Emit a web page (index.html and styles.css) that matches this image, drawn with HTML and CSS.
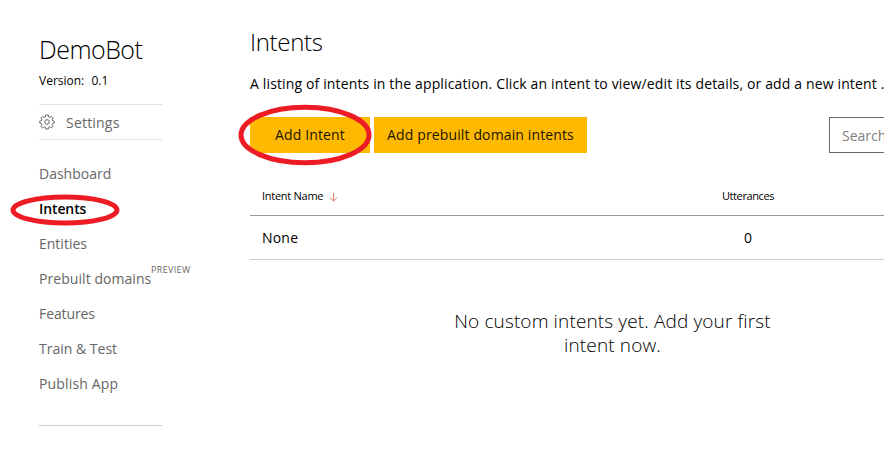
FILE: index.html
```html
<!DOCTYPE html>
<html lang="en">
<head>
<meta charset="utf-8">
<title>DemoBot - Intents</title>
<link rel="stylesheet" href="styles.css">
</head>
<body>
<div class="app">
  <aside class="sidebar">
    <h1 class="app-name">DemoBot</h1>
    <p class="version">Version: <span class="version-number">0.1</span></p>
    <a class="settings">
      <svg class="gear" viewBox="0 0 16 16" width="16" height="16">
        <path d="M6.7 1h2.6l.4 2 1.1.45 1.7-1.1 1.65 1.65-1.1 1.7.45 1.1 1.8.35v1.9l-1.8.4-.45 1.1 1.1 1.7-1.65 1.65-1.7-1.1-1.1.45-.4 1.75H6.7l-.4-1.75-1.1-.45-1.7 1.1-1.65-1.65 1.1-1.7-.45-1.1-1.75-.4v-1.9l1.75-.35.45-1.1-1.1-1.7L3.5 2.35l1.7 1.1L6.3 3z"/>
        <circle cx="8" cy="8" r="2.3"/>
      </svg>
      <span class="settings-label">Settings</span>
    </a>
    <nav class="menu">
      <a class="item">Dashboard</a>
      <a class="item active">Intents<svg class="mark mark-nav" viewBox="0 0 110 32" width="110" height="32"><ellipse cx="55" cy="16" rx="52" ry="13"/></svg></a>
      <a class="item">Entities</a>
      <a class="item prebuilt">Prebuilt domains<span class="preview">PREVIEW</span></a>
      <a class="item features">Features</a>
      <a class="item">Train &amp; Test</a>
      <a class="item publish">Publish App</a>
    </nav>
  </aside>
  <main class="content">
    <h2 class="title">Intents</h2>
    <p class="description">A listing of intents in the application. Click an intent to view/edit its details, or add a new intent .</p>
    <div class="toolbar">
      <button class="button add"><span>Add Intent</span><svg class="mark mark-add" viewBox="0 0 134 62" width="134" height="62"><ellipse cx="67" cy="31" rx="64" ry="27.7"/></svg></button>
      <button class="button add-prebuilt"><span>Add prebuilt domain intents</span></button>
      <input class="search" placeholder="Search">
    </div>
    <div class="table">
      <div class="row head">
        <div class="cell"><span class="col-name">Intent Name</span><svg class="sort" viewBox="0 0 9 10" width="9" height="10"><path d="M4.5 1v8M1 5.7 4.5 9 8 5.7"/></svg></div>
        <div class="cell count"><span class="col-count">Utterances</span></div>
      </div>
      <div class="row">
        <div class="cell"><span class="name">None</span></div>
        <div class="cell count">0</div>
      </div>
    </div>
    <p class="empty">No custom intents yet. Add your first<br>intent now.</p>
  </main>
</div>
</body>
</html>
```
FILE: styles.css
```css
* { box-sizing: border-box; }
body {
  margin: 0;
  width: 884px;
  height: 455px;
  overflow: hidden;
  background: #fff;
  color: #000;
  font: 14px/20px "Open Sans", "Noto Sans", sans-serif;
}
h1, h2, p { margin: 0; font-weight: 300; }
.app { display: flex; width: 884px; height: 455px; overflow: hidden; }
.sidebar { width: 123px; margin-left: 39px; flex: none; padding-top: 33px; }
.app-name { font-size: 25px; line-height: 32px; letter-spacing: -.5px; white-space: nowrap; }
.version { margin-top: 6px; font-size: 12px; font-weight: 400; white-space: nowrap; }
.version-number { margin-left: 4px; }
.settings {
  display: flex;
  align-items: center;
  height: 36px;
  margin-top: 13px;
  border-top: 1px solid #e1e1e1;
  border-bottom: 1px solid #e1e1e1;
  color: #666;
}
.settings-label { margin: 2px 0 0 11px; letter-spacing: .2px; }
.gear { fill: none; stroke: #666; stroke-width: 1; }
.menu { height: 286px; padding-top: 16px; border-bottom: 1px solid #ccc; }
.item {
  display: block;
  position: relative;
  width: max-content;
  height: 35px;
  line-height: 35px;
  color: #666;
  white-space: nowrap;
}
.active { color: #000; font-weight: 600; letter-spacing: -.1px; }
.prebuilt { letter-spacing: .06px; }
.features { letter-spacing: -.1px; }
.publish { letter-spacing: .16px; }
.preview { position: absolute; left: 112px; top: 3px; font-size: 9px; line-height: 12px; letter-spacing: .35px; }
.mark { position: absolute; fill: none; stroke: #ed1c24; overflow: visible; pointer-events: none; }
.mark-nav { left: -29.5px; top: 2.5px; stroke-width: 5; }
.mark-add { left: -12px; top: -13px; stroke-width: 5; }
.content { width: 654px; margin-left: 68px; flex: none; padding: 26px 0 0 20px; overflow: hidden; }
.title { font-size: 24px; line-height: 32px; letter-spacing: -.3px; }
.description { margin-top: 16px; white-space: nowrap; font-weight: 400; letter-spacing: .142px; }
.toolbar { display: flex; margin-top: 23px; }
.button {
  position: relative;
  flex: none;
  height: 36px;
  padding: 0;
  border: 0;
  background: #ffb900;
  color: #1a1400;
  font: inherit;
  letter-spacing: .13px;
  white-space: nowrap;
}
.add { width: 120px; }
.add-prebuilt { width: 213px; margin-left: 4px; }
.search {
  width: 200px;
  height: 36px;
  margin-left: 242px;
  flex: none;
  padding: 0 12px;
  border: 1px solid #666;
  background: #fff;
  font: inherit;
}
.search::placeholder { color: #808080; opacity: 1; }
.table { margin-top: 24px; }
.row { display: grid; grid-template-columns: 448px 100px; height: 44px; align-items: center; border-bottom: 1px solid #ccc; }
.head { height: 39px; font-size: 11px; border-color: #999; }
.cell { padding-left: 12px; white-space: nowrap; }
.count { padding: 0; text-align: center; }
.col-name { letter-spacing: -.27px; }
.col-count { letter-spacing: -.4px; }
.name { letter-spacing: .2px; }
.sort { margin-left: 6px; vertical-align: -2px; fill: none; stroke: #d9775d; }
.empty { width: 725px; margin-top: 49px; text-align: center; font-size: 19px; line-height: 24px; letter-spacing: .13px; }
```
